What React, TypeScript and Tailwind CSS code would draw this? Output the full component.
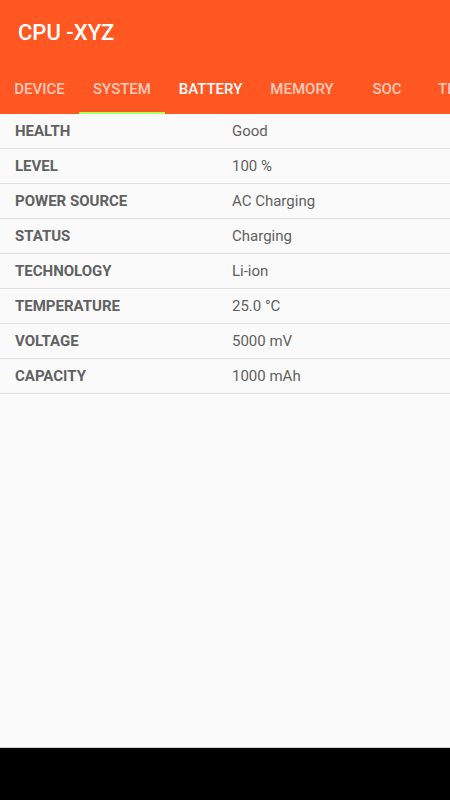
import React from "react";

const rows: [string, string][] = [
  ["HEALTH", "Good"],
  ["LEVEL", "100 %"],
  ["POWER SOURCE", "AC Charging"],
  ["STATUS", "Charging"],
  ["TECHNOLOGY", "Li-ion"],
  ["TEMPERATURE", "25.0 °C"],
  ["VOLTAGE", "5000 mV"],
  ["CAPACITY", "1000 mAh"],
];

export default function App() {
  return (
    <div
      className="w-[450px] h-[800px] flex flex-col bg-[#fafafa] overflow-hidden"
      style={{ fontFamily: "Roboto, 'Liberation Sans', sans-serif" }}
    >
      <div className="bg-[#ff5722] shrink-0">
        <div className="h-[64px] flex items-center pl-[18px]">
          <span className="text-white text-[22px] font-medium">CPU -XYZ</span>
        </div>
        <div className="h-[50px] flex text-[15px] font-medium whitespace-nowrap overflow-hidden">
          <div className="w-[79px] shrink-0 flex items-center justify-center text-white/70">DEVICE</div>
          <div className="w-[86px] shrink-0 flex flex-col">
            <div className="flex-1 flex items-center justify-center text-white/70 pt-[2px]">SYSTEM</div>
            <div className="h-[2px] bg-[#b2ff59]" />
          </div>
          <div className="w-[91px] shrink-0 flex items-center justify-center text-white">BATTERY</div>
          <div className="w-[92px] shrink-0 flex items-center justify-center text-white/70">MEMORY</div>
          <div className="w-[78px] shrink-0 flex items-center justify-center text-white/70">SOC</div>
          <div className="w-[24px] shrink-0 flex items-center pl-[12px] overflow-hidden text-white/70">
            <span>TE</span>
          </div>
        </div>
      </div>
      <div className="flex-1 flex flex-col">
        {rows.map(([k, v]) => (
          <div key={k} className="h-[35px] flex items-center border-b border-[#e0e0e0] text-[15px] text-[#616161]">
            <div className="w-[232px] pl-[15px] font-bold">{k}</div>
            <div>{v}</div>
          </div>
        ))}
        <div className="flex-1" />
        <div className="h-px bg-[#d0d0d0]" />
      </div>
      <div className="h-[52px] bg-black shrink-0" />
    </div>
  );
}
